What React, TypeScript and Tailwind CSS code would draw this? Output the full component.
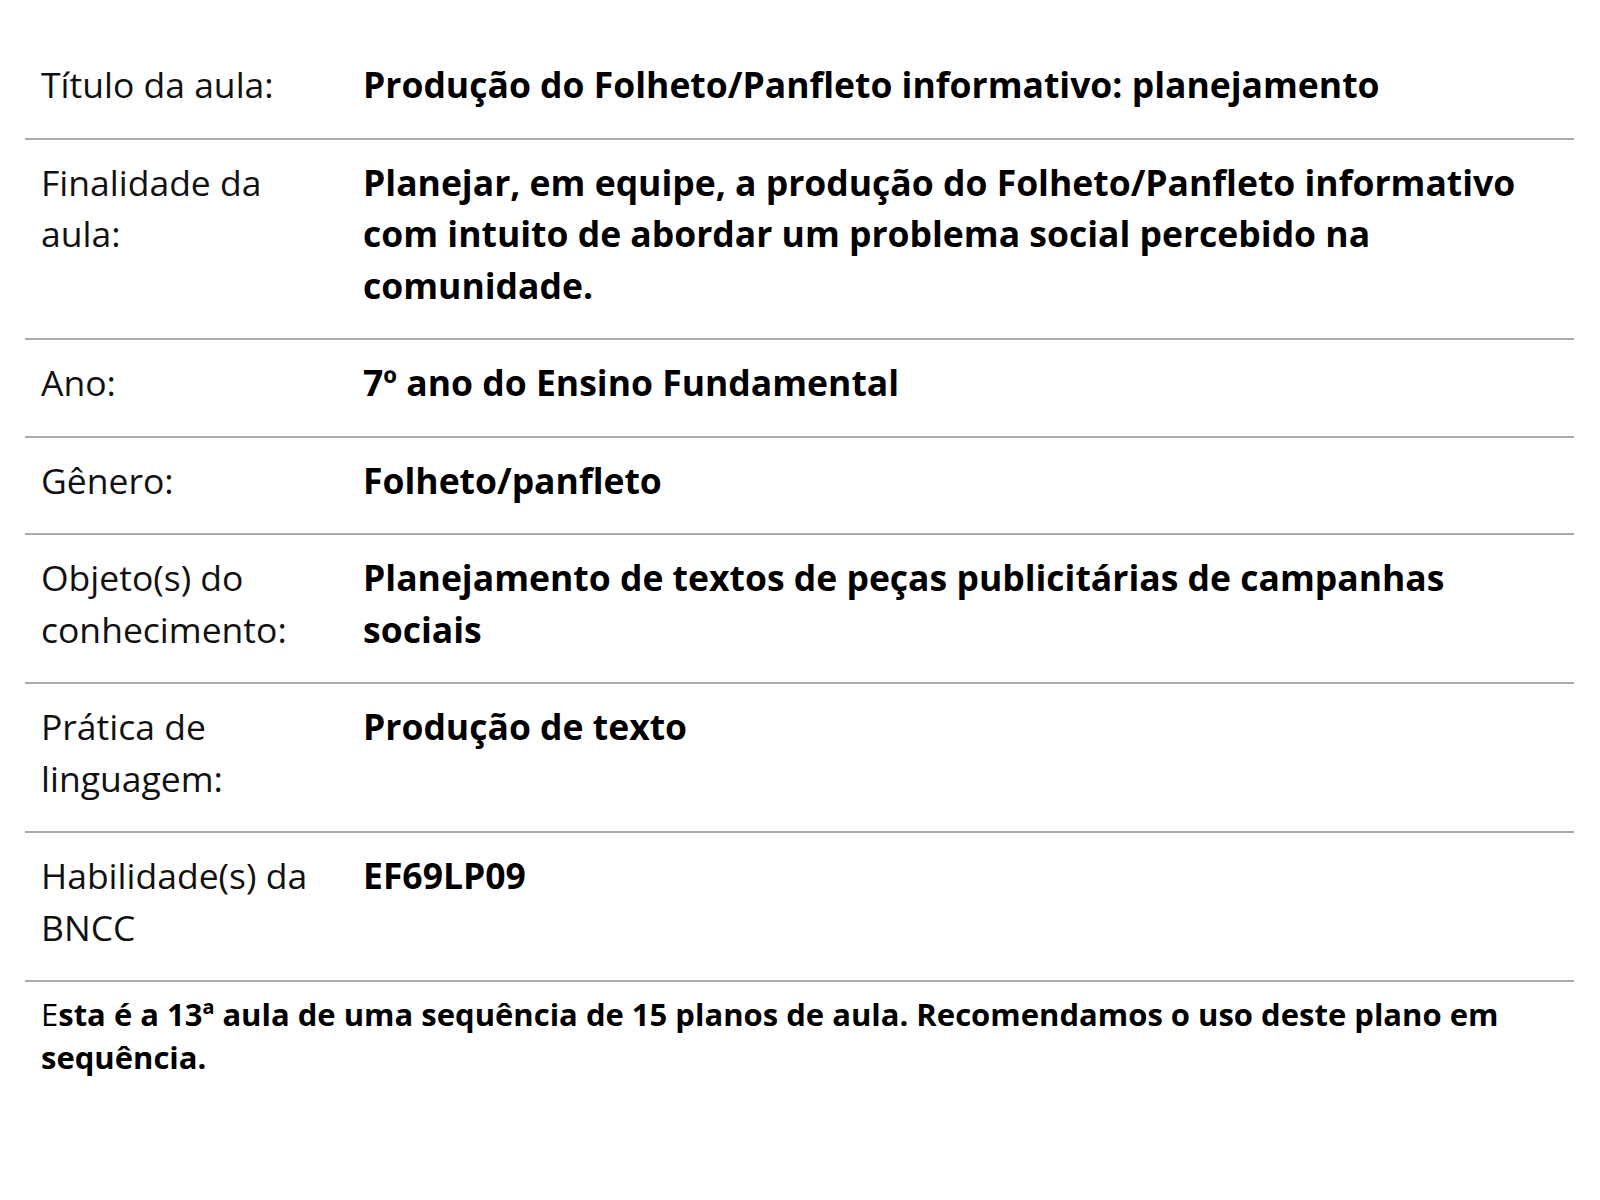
import React from "react";

const rows: { label: string; value: string }[] = [
  { label: "Título da aula:", value: "Produção do Folheto/Panfleto informativo: planejamento" },
  {
    label: "Finalidade da aula:",
    value:
      "Planejar, em equipe, a produção do Folheto/Panfleto informativo com intuito de abordar um problema social percebido na comunidade.",
  },
  { label: "Ano:", value: "7º ano do Ensino Fundamental" },
  { label: "Gênero:", value: "Folheto/panfleto" },
  {
    label: "Objeto(s) do conhecimento:",
    value: "Planejamento de textos de peças publicitárias de campanhas sociais",
  },
  { label: "Prática de linguagem:", value: "Produção de texto" },
  { label: "Habilidade(s) da BNCC", value: "EF69LP09" },
];

export default function App() {
  return (
    <div
      className="bg-white text-black min-h-[1200px] pt-[42px] pl-[25px] pr-[26px]"
      style={{ fontFamily: '"Open Sans", sans-serif' }}
    >
      <div className="flex flex-col">
        {rows.map((r, i) => (
          <div
            key={i}
            className="grid grid-cols-[322px_1fr] border-b-2 border-[#aaaaaa] pb-[27px] pt-[17px]"
          >
            <div className="px-[16px] text-[35.5px] leading-[51.5px] font-normal text-[#111]">{r.label}</div>
            <div className="px-[16px] text-[35.5px] leading-[51.5px] font-bold text-black">{r.value}</div>
          </div>
        ))}
      </div>
      <p className="px-[16px] pt-[11px] text-[31px] leading-[43px] font-bold text-black">
        <span className="font-normal">E</span>sta é a 13ª aula de uma sequência de 15 planos de aula. Recomendamos o uso
        deste plano em sequência.
      </p>
    </div>
  );
}
